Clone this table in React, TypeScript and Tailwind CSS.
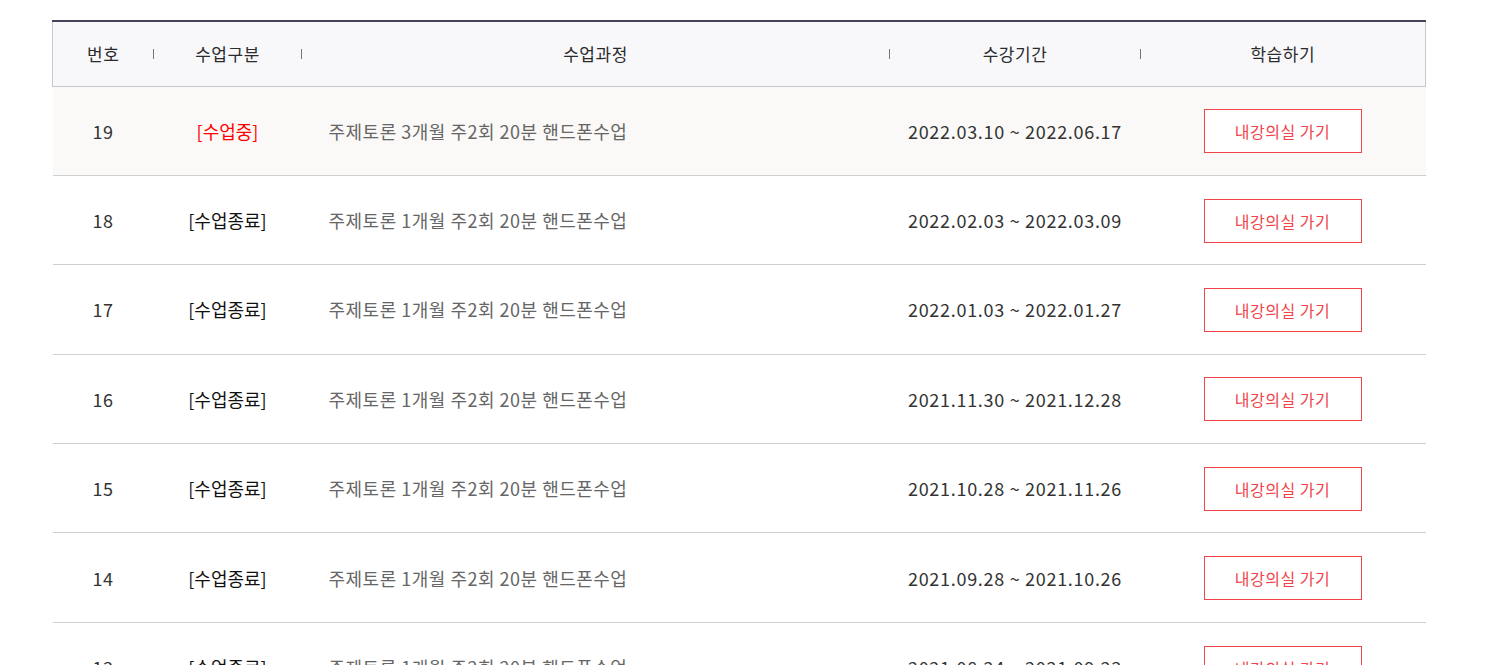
import React from 'react';

type Row = {
  no: number;
  status: string;
  active?: boolean;
  title: string;
  period: string;
};

const rows: Row[] = [
  { no: 19, status: '[수업중]', active: true, title: '주제토론 3개월 주2회 20분 핸드폰수업', period: '2022.03.10 ~ 2022.06.17' },
  { no: 18, status: '[수업종료]', title: '주제토론 1개월 주2회 20분 핸드폰수업', period: '2022.02.03 ~ 2022.03.09' },
  { no: 17, status: '[수업종료]', title: '주제토론 1개월 주2회 20분 핸드폰수업', period: '2022.01.03 ~ 2022.01.27' },
  { no: 16, status: '[수업종료]', title: '주제토론 1개월 주2회 20분 핸드폰수업', period: '2021.11.30 ~ 2021.12.28' },
  { no: 15, status: '[수업종료]', title: '주제토론 1개월 주2회 20분 핸드폰수업', period: '2021.10.28 ~ 2021.11.26' },
  { no: 14, status: '[수업종료]', title: '주제토론 1개월 주2회 20분 핸드폰수업', period: '2021.09.28 ~ 2021.10.26' },
  { no: 13, status: '[수업종료]', title: '주제토론 1개월 주2회 20분 핸드폰수업', period: '2021.08.24 ~ 2021.09.23' },
];

const font = { fontFamily: '"Noto Sans CJK KR", "Noto Sans", sans-serif' };

function HeadCell({ label, sep = true }: { label: string; sep?: boolean }) {
  return (
    <th className="relative h-[65px] p-0 text-center text-[17px] font-normal tracking-[0.5px] text-[#2b2b2b]">
      {label}
      {sep && <span className="absolute right-0 top-1/2 h-[10px] w-px -translate-y-1/2 bg-[#777]" aria-hidden="true" />}
    </th>
  );
}

export default function App() {
  return (
    <div className="h-[665px] overflow-hidden bg-white pt-5" style={font}>
      <div className="ml-[52px] w-[1374px]">
        <table className="w-full table-fixed border-collapse">
          <colgroup>
            <col className="w-[101px]" />
            <col className="w-[148px]" />
            <col className="w-[588px]" />
            <col className="w-[251px]" />
            <col />
          </colgroup>
          <thead>
            <tr className="border-x border-t-2 border-b border-x-[#c8c8cc] border-t-[#44445a] border-b-[#c8c8cc] bg-[#f8f8fb]">
              <HeadCell label="번호" />
              <HeadCell label="수업구분" />
              <HeadCell label="수업과정" />
              <HeadCell label="수강기간" />
              <HeadCell label="학습하기" sep={false} />
            </tr>
          </thead>
          <tbody>
            {rows.map((r) => (
              <tr key={r.no} className={`border-b border-[#cfcfd3] ${r.active ? 'bg-[#faf9f7]' : 'bg-white'}`}>
                <td className="h-[89.4px] p-0 pt-px text-center text-[18px] tracking-[0.5px] text-[#333]">{r.no}</td>
                <td className={`p-0 pt-px text-center text-[18px] ${r.active ? 'text-[#ff0000]' : 'text-[#111]'}`}>{r.status}</td>
                <td className="p-0 pt-px pl-[27px] text-left text-[18px] tracking-[0.5px] text-[#666]">{r.title}</td>
                <td className="p-0 pt-px text-center text-[18px] tracking-[0.7px] text-[#333]">{r.period}</td>
                <td className="p-0 text-center">
                  <button className="ml-[-1px] mt-px h-[44px] w-[158px] border border-[#f0444a] bg-white text-[16px] tracking-[0.5px] text-[#f0444a]">
                    내강의실 가기
                  </button>
                </td>
              </tr>
            ))}
          </tbody>
        </table>
      </div>
    </div>
  );
}
